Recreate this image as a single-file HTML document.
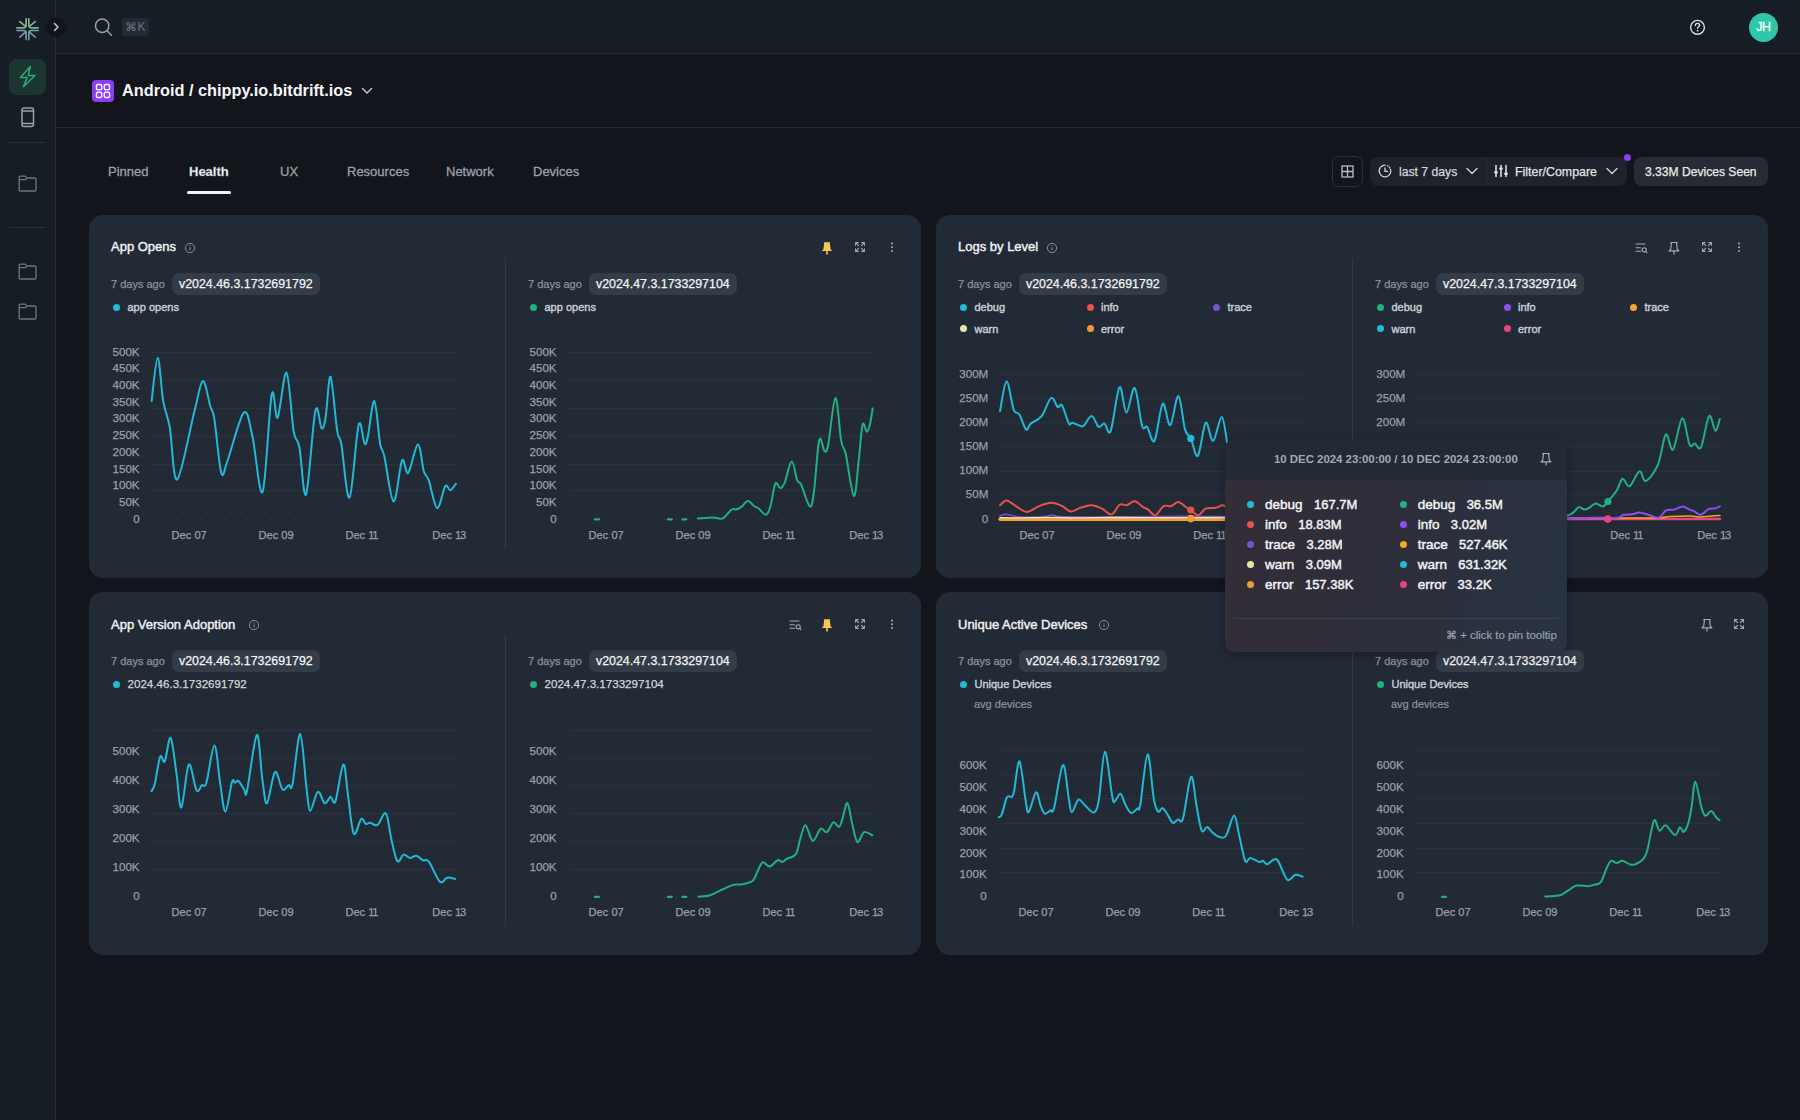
<!DOCTYPE html><html><head><meta charset='utf-8'><style>
*{box-sizing:border-box;margin:0;padding:0}
html,body{width:1800px;height:1120px;overflow:hidden;background:#12151c;font-family:"Liberation Sans", sans-serif;}
.a{position:absolute;white-space:nowrap}
.card{position:absolute;background:#222a36;border-radius:14px}
.ttl{font-size:13px;font-weight:400;color:#f1f3f5;-webkit-text-stroke:0.4px #f1f3f5}
.ago{font-size:11px;color:#8b929b;-webkit-text-stroke:0.25px #8b929b}
.badge{position:absolute;height:22px;border-radius:7px;background:#333c47;color:#f3f4f6;font-size:12.4px;line-height:22px;padding:0 7px;-webkit-text-stroke:0.25px #f3f4f6}
.leg{font-size:11px;font-weight:400;color:#c9ced4;-webkit-text-stroke:0.4px #c9ced4}
.leg2{font-size:11.6px;color:#d3d7dc;-webkit-text-stroke:0.25px #d3d7dc}
.dot{position:absolute;width:7px;height:7px;border-radius:50%}
.yl{position:absolute;font-size:11.6px;color:#9aa0a8;-webkit-text-stroke:0.25px #9aa0a8;text-align:right;width:40px;line-height:12px}
.xl{position:absolute;font-size:11.1px;color:#9aa0a8;-webkit-text-stroke:0.25px #9aa0a8;line-height:13px}
.tab{position:absolute;font-size:13px;color:#9ba1a9;top:164px;line-height:15px;-webkit-text-stroke:0.3px #9ba1a9}
</style></head><body><div class='a' style='left:0;top:0;width:55px;height:1120px;background:#161d24'></div><div class='a' style='left:55px;top:0;width:1px;height:1120px;background:#272c35'></div><div class='a' style='left:56px;top:54px;width:4px;height:1066px;background:#131619'></div><div class='a' style='left:56px;top:0;width:1744px;height:53px;background:#161d24'></div><div class='a' style='left:56px;top:53px;width:1744px;height:1px;background:#272c35'></div><div class='a' style='left:56px;top:127px;width:1744px;height:1px;background:#262b33'></div><svg class='a' style='left:14px;top:15px' width='28' height='28' viewBox='0 0 28 28'>
<defs><linearGradient id='lg' gradientUnits='userSpaceOnUse' x1='0' y1='3' x2='0' y2='26'><stop offset='0' stop-color='#8dbf8e'/><stop offset='0.5' stop-color='#7ea89f'/><stop offset='1' stop-color='#648db8'/></linearGradient></defs>
<g stroke='url(#lg)' stroke-width='1.7' stroke-linecap='round' fill='none' transform='translate(13.5 14.3) scale(0.95) translate(-13.5 -14.3)'>
<path d='M12.1,3.3V10Q12.1,12.8 9.3,12.8H2.3M14.9,3.3V10Q14.9,12.8 17.7,12.8H24.7M12.1,25.3V18.4Q12.1,15.6 9.3,15.6H2.3M14.9,25.3V18.4Q14.9,15.6 17.7,15.6H24.7M5.4,6.1L10.5,10.4M21.6,6.1L16.5,10.4M5.4,22.5L10.4,18M21.6,22.5L16.6,18'/>
</g></svg><div class='a' style='left:46px;top:17px;width:20px;height:20px;border-radius:50%;background:#11141a'></div><svg class='a' style='left:51px;top:21px' width='10' height='12' viewBox='0 0 10 12'><path d='M3.5 2.5L7 6L3.5 9.5' stroke='#c4c8ce' stroke-width='1.5' fill='none' stroke-linecap='round' stroke-linejoin='round'/></svg><svg class='a' style='left:92px;top:16px' width='24' height='24' viewBox='0 0 24 24'><circle cx='10.2' cy='9.8' r='6.7' stroke='#9aa0a8' stroke-width='1.5' fill='none'/><path d='M15 14.8L19.4 19.2' stroke='#9aa0a8' stroke-width='1.5' stroke-linecap='round'/></svg><div class='a' style='left:122px;top:18px;width:27px;height:18px;border-radius:3px;background:#232a33;color:#6d7480;font-size:12px;line-height:18px;text-align:center'>&#8984;K</div><svg class='a' style='left:1688px;top:18px' width='19' height='19' viewBox='0 0 19 19'><circle cx='9.5' cy='9.3' r='6.9' stroke='#dcdfe3' stroke-width='1.4' fill='none'/><path d='M7.4 7.4C7.4 6.2 8.3 5.4 9.5 5.4C10.7 5.4 11.6 6.2 11.6 7.3C11.6 8.6 9.6 8.8 9.6 10.3' stroke='#dcdfe3' stroke-width='1.4' fill='none' stroke-linecap='round'/><circle cx='9.6' cy='12.7' r='0.9' fill='#dcdfe3'/></svg><div class='a' style='left:1749px;top:13px;width:29px;height:29px;border-radius:50%;background:#2ec7a9;color:#f4fffb;font-size:12.5px;font-weight:400;line-height:29px;text-align:center;letter-spacing:-0.3px;-webkit-text-stroke:0.35px #f4fffb'>JH</div><div class='a' style='left:9px;top:59px;width:37px;height:36px;border-radius:8px;background:#1b3530'></div><svg class='a' style='left:18px;top:65px' width='20' height='24' viewBox='0 0 20 24'><path d='M12.3 1.6L2.4 12.4H9.2L5.4 21.8L16.9 10.4H10.3Z' stroke='#28ad7b' stroke-width='1.45' fill='none' stroke-linejoin='round'/></svg><svg class='a' style='left:20px;top:106px' width='16' height='22' viewBox='0 0 16 22'><rect x='2' y='2' width='11.5' height='18.5' rx='2' stroke='#9aa1ab' stroke-width='1.5' fill='none'/><path d='M2 5H13.5M2 17.5H13.5' stroke='#9aa1ab' stroke-width='1.3'/></svg><div class='a' style='left:9px;top:142px;width:37px;height:1px;background:#2a2f38'></div><div class='a' style='left:9px;top:227px;width:37px;height:1px;background:#2a2f38'></div><svg class='a' style='left:18px;top:175px' width='20' height='17' viewBox='0 0 20 17'><path d='M1.2 2.2C1.2 1.6 1.6 1.2 2.2 1.2H7L8.6 3H17C17.6 3 18 3.4 18 4V15C18 15.6 17.6 16 17 16H2.2C1.6 16 1.2 15.6 1.2 15Z M1.2 4.6H8.6' stroke='#6f7680' stroke-width='1.3' fill='none' stroke-linejoin='round'/></svg><svg class='a' style='left:18px;top:263px' width='20' height='17' viewBox='0 0 20 17'><path d='M1.2 2.2C1.2 1.6 1.6 1.2 2.2 1.2H7L8.6 3H17C17.6 3 18 3.4 18 4V15C18 15.6 17.6 16 17 16H2.2C1.6 16 1.2 15.6 1.2 15Z M1.2 4.6H8.6' stroke='#6f7680' stroke-width='1.3' fill='none' stroke-linejoin='round'/></svg><svg class='a' style='left:18px;top:303px' width='20' height='17' viewBox='0 0 20 17'><path d='M1.2 2.2C1.2 1.6 1.6 1.2 2.2 1.2H7L8.6 3H17C17.6 3 18 3.4 18 4V15C18 15.6 17.6 16 17 16H2.2C1.6 16 1.2 15.6 1.2 15Z M1.2 4.6H8.6' stroke='#6f7680' stroke-width='1.3' fill='none' stroke-linejoin='round'/></svg><div class='a' style='left:92px;top:80px;width:22px;height:22px;border-radius:4px;background:#8a3ff2'></div><svg class='a' style='left:92px;top:80px' width='22' height='22' viewBox='0 0 22 22'><g stroke='#f4ecff' stroke-width='1.5' fill='none'><rect x='4.5' y='4.5' width='5.2' height='5.2' rx='1.2'/><rect x='12.3' y='4.5' width='5.2' height='5.2' rx='1.2'/><rect x='4.5' y='12.3' width='5.2' height='5.2' rx='1.2'/><rect x='12.3' y='12.3' width='5.2' height='5.2' rx='1.2'/></g></svg><div class='a' style='left:122px;top:81px;font-size:16.3px;font-weight:700;color:#f5f6f8;line-height:19px'>Android / chippy.io.bitdrift.ios</div><svg class='a' style='left:360px;top:85px' width='14' height='12' viewBox='0 0 14 12'><path d='M2.5 3.5L7 8L11.5 3.5' stroke='#c9cdd3' stroke-width='1.4' fill='none' stroke-linecap='round' stroke-linejoin='round'/></svg><div class='tab' style='left:108px'>Pinned</div><div class='tab' style='left:189px;color:#f6f7f9;font-weight:700'>Health</div><div class='tab' style='left:280px'>UX</div><div class='tab' style='left:347px'>Resources</div><div class='tab' style='left:446px'>Network</div><div class='tab' style='left:533px'>Devices</div><div class='a' style='left:187px;top:191px;width:44px;height:3px;border-radius:2px;background:#f0f2f4'></div><div class='a' style='left:1332px;top:156px;width:31px;height:31px;border-radius:7px;border:1px solid #2b3039;background:#12151b'></div><svg class='a' style='left:1340px;top:164px' width='15' height='15' viewBox='0 0 15 15'><g stroke='#b9bec5' stroke-width='1.3' fill='none'><rect x='2' y='2' width='11' height='11'/><path d='M7.5 2V13M2 7.5H13'/></g></svg><div class='a' style='left:1370px;top:157px;width:257px;height:29px;border-radius:8px;background:#1e222a'></div><div class='a' style='left:1486px;top:157px;width:1px;height:29px;background:#2a2e36'></div><svg class='a' style='left:1377px;top:163px' width='16' height='16' viewBox='0 0 16 16'><g stroke='#d4d7dc' stroke-width='1.3' fill='none' stroke-linecap='round'><path d='M8 2.2A5.8 5.8 0 1 0 13.8 8'/><path d='M10.5 2.8L11 3.1M12.4 4.3L12.8 4.9M13.5 6.3L13.7 6.9'/><path d='M8 5V8.3H10.6'/></g></svg><div class='a' style='left:1399px;top:165px;font-size:12.2px;color:#d3d6db;line-height:15px;-webkit-text-stroke:0.25px #d3d6db'>last 7 days</div><svg class='a' style='left:1465px;top:165px' width='14' height='12' viewBox='0 0 14 12'><path d='M2 3.5L7 8.5L12 3.5' stroke='#cfd3d8' stroke-width='1.4' fill='none' stroke-linecap='round' stroke-linejoin='round'/></svg><svg class='a' style='left:1493px;top:163px' width='16' height='16' viewBox='0 0 16 16'><g stroke='#e3e5e9' stroke-width='1.5' stroke-linecap='round'><path d='M3 2.5V13.5M8 2.5V13.5M13 2.5V13.5'/></g><g fill='#e3e5e9'><rect x='1.2' y='8.2' width='3.6' height='2.4' rx='1'/><rect x='6.2' y='4.4' width='3.6' height='2.4' rx='1'/><rect x='11.2' y='9.6' width='3.6' height='2.4' rx='1'/></g></svg><div class='a' style='left:1515px;top:165px;font-size:12.4px;color:#e0e3e7;line-height:15px;-webkit-text-stroke:0.25px #e0e3e7'>Filter/Compare</div><svg class='a' style='left:1605px;top:165px' width='14' height='12' viewBox='0 0 14 12'><path d='M2 3.5L7 8.5L12 3.5' stroke='#cfd3d8' stroke-width='1.4' fill='none' stroke-linecap='round' stroke-linejoin='round'/></svg><div class='a' style='left:1623.5px;top:153.5px;width:7px;height:7px;border-radius:50%;background:#8a3ef5'></div><div class='a' style='left:1634px;top:157px;width:134px;height:29px;border-radius:8px;background:#272b33;color:#e8eaed;font-size:12.1px;line-height:31px;padding-left:11px;-webkit-text-stroke:0.25px #e8eaed'>3.33M Devices Seen</div><div class='card' style='left:89px;top:215px;width:832px;height:363px'></div><div class='a' style='left:505px;top:258px;width:1px;height:291px;background:#323a46'></div><div class='card' style='left:936px;top:215px;width:832px;height:363px'></div><div class='a' style='left:1352px;top:258px;width:1px;height:291px;background:#323a46'></div><div class='card' style='left:89px;top:592px;width:832px;height:363px'></div><div class='a' style='left:505px;top:635px;width:1px;height:291px;background:#323a46'></div><div class='card' style='left:936px;top:592px;width:832px;height:363px'></div><div class='a' style='left:1352px;top:635px;width:1px;height:291px;background:#323a46'></div><div class='a ttl' style='left:111px;top:240px;line-height:14px'>App Opens</div><svg class='a' style='left:184px;top:242.3px' width='12' height='12' viewBox='0 0 12 12'><circle cx='6' cy='6' r='4.6' stroke='#8a919b' stroke-width='1' fill='none'/><path d='M6 5.3V8.3' stroke='#8a919b' stroke-width='1'/><circle cx='6' cy='3.8' r='0.6' fill='#8a919b'/></svg><div class='a ttl' style='left:958px;top:240px;line-height:14px'>Logs by Level</div><svg class='a' style='left:1046px;top:242.3px' width='12' height='12' viewBox='0 0 12 12'><circle cx='6' cy='6' r='4.6' stroke='#8a919b' stroke-width='1' fill='none'/><path d='M6 5.3V8.3' stroke='#8a919b' stroke-width='1'/><circle cx='6' cy='3.8' r='0.6' fill='#8a919b'/></svg><div class='a ttl' style='left:111px;top:618px;line-height:14px'>App Version Adoption</div><svg class='a' style='left:247.5px;top:619.3px' width='12' height='12' viewBox='0 0 12 12'><circle cx='6' cy='6' r='4.6' stroke='#8a919b' stroke-width='1' fill='none'/><path d='M6 5.3V8.3' stroke='#8a919b' stroke-width='1'/><circle cx='6' cy='3.8' r='0.6' fill='#8a919b'/></svg><div class='a ttl' style='left:958px;top:618px;line-height:14px'>Unique Active Devices</div><svg class='a' style='left:1097.5px;top:619.3px' width='12' height='12' viewBox='0 0 12 12'><circle cx='6' cy='6' r='4.6' stroke='#8a919b' stroke-width='1' fill='none'/><path d='M6 5.3V8.3' stroke='#8a919b' stroke-width='1'/><circle cx='6' cy='3.8' r='0.6' fill='#8a919b'/></svg><svg class='a' style='left:819px;top:240px' width='16' height='16' viewBox='0 0 16 16'><path d='M4.6 2.2H11.4L10.8 3L11.6 9.2L13.2 11H2.8L4.4 9.2L5.2 3Z' fill='#f6ca52'/><path d='M8 11V14.6' stroke='#f6ca52' stroke-width='1.6'/></svg><svg class='a' style='left:853px;top:240px' width='14' height='14' viewBox='0 0 14 14'><g stroke='#a3a9b1' stroke-width='1.1' fill='none' stroke-linecap='round'><path d='M2.6 5.2V2.6H5.2M2.6 2.6L5.6 5.6M11.4 5.2V2.6H8.8M11.4 2.6L8.4 5.6M2.6 8.8V11.4H5.2M2.6 11.4L5.6 8.4M11.4 8.8V11.4H8.8M11.4 11.4L8.4 8.4'/></g></svg><svg class='a' style='left:889px;top:240px' width='6' height='14' viewBox='0 0 6 14'><circle cx='3' cy='3.5' r='1' fill='#a9aeb6'/><circle cx='3' cy='7.2' r='1' fill='#a9aeb6'/><circle cx='3' cy='10.9' r='1' fill='#a9aeb6'/></svg><svg class='a' style='left:1634.2px;top:240.8px' width='16' height='14' viewBox='0 0 16 14'><g stroke='#a3a9b1' stroke-width='1.1' fill='none' stroke-linecap='round'><path d='M2 3H11M2 6.8H6.5M2 10.2H6.5'/><circle cx='10.2' cy='8.8' r='2.1'/><path d='M11.7 10.3L13 11.6'/></g></svg><svg class='a' style='left:1666px;top:240px' width='16' height='16' viewBox='0 0 16 16'><path d='M4.8 2.5H11.2L10.6 3.2L11.3 9.2L12.9 10.9H3.1L4.7 9.2L5.4 3.2Z' stroke='#a3a9b1' stroke-width='1.2' fill='none' stroke-linejoin='round'/><path d='M8 10.9V14.5' stroke='#a3a9b1' stroke-width='1.2'/></svg><svg class='a' style='left:1700px;top:240px' width='14' height='14' viewBox='0 0 14 14'><g stroke='#a3a9b1' stroke-width='1.1' fill='none' stroke-linecap='round'><path d='M2.6 5.2V2.6H5.2M2.6 2.6L5.6 5.6M11.4 5.2V2.6H8.8M11.4 2.6L8.4 5.6M2.6 8.8V11.4H5.2M2.6 11.4L5.6 8.4M11.4 8.8V11.4H8.8M11.4 11.4L8.4 8.4'/></g></svg><svg class='a' style='left:1736px;top:240px' width='6' height='14' viewBox='0 0 6 14'><circle cx='3' cy='3.5' r='1' fill='#a9aeb6'/><circle cx='3' cy='7.2' r='1' fill='#a9aeb6'/><circle cx='3' cy='10.9' r='1' fill='#a9aeb6'/></svg><svg class='a' style='left:788.2px;top:617.8px' width='16' height='14' viewBox='0 0 16 14'><g stroke='#a3a9b1' stroke-width='1.1' fill='none' stroke-linecap='round'><path d='M2 3H11M2 6.8H6.5M2 10.2H6.5'/><circle cx='10.2' cy='8.8' r='2.1'/><path d='M11.7 10.3L13 11.6'/></g></svg><svg class='a' style='left:819px;top:617px' width='16' height='16' viewBox='0 0 16 16'><path d='M4.6 2.2H11.4L10.8 3L11.6 9.2L13.2 11H2.8L4.4 9.2L5.2 3Z' fill='#f6ca52'/><path d='M8 11V14.6' stroke='#f6ca52' stroke-width='1.6'/></svg><svg class='a' style='left:853px;top:617px' width='14' height='14' viewBox='0 0 14 14'><g stroke='#a3a9b1' stroke-width='1.1' fill='none' stroke-linecap='round'><path d='M2.6 5.2V2.6H5.2M2.6 2.6L5.6 5.6M11.4 5.2V2.6H8.8M11.4 2.6L8.4 5.6M2.6 8.8V11.4H5.2M2.6 11.4L5.6 8.4M11.4 8.8V11.4H8.8M11.4 11.4L8.4 8.4'/></g></svg><svg class='a' style='left:889px;top:617px' width='6' height='14' viewBox='0 0 6 14'><circle cx='3' cy='3.5' r='1' fill='#a9aeb6'/><circle cx='3' cy='7.2' r='1' fill='#a9aeb6'/><circle cx='3' cy='10.9' r='1' fill='#a9aeb6'/></svg><svg class='a' style='left:1699px;top:617px' width='16' height='16' viewBox='0 0 16 16'><path d='M4.8 2.5H11.2L10.6 3.2L11.3 9.2L12.9 10.9H3.1L4.7 9.2L5.4 3.2Z' stroke='#a3a9b1' stroke-width='1.2' fill='none' stroke-linejoin='round'/><path d='M8 10.9V14.5' stroke='#a3a9b1' stroke-width='1.2'/></svg><svg class='a' style='left:1732px;top:617px' width='14' height='14' viewBox='0 0 14 14'><g stroke='#a3a9b1' stroke-width='1.1' fill='none' stroke-linecap='round'><path d='M2.6 5.2V2.6H5.2M2.6 2.6L5.6 5.6M11.4 5.2V2.6H8.8M11.4 2.6L8.4 5.6M2.6 8.8V11.4H5.2M2.6 11.4L5.6 8.4M11.4 8.8V11.4H8.8M11.4 11.4L8.4 8.4'/></g></svg><div class='a ago' style='left:111px;top:277px;line-height:14px'>7 days ago</div><div class='badge' style='left:172px;top:273px'>v2024.46.3.1732691792</div><div class='a ago' style='left:528px;top:277px;line-height:14px'>7 days ago</div><div class='badge' style='left:589px;top:273px'>v2024.47.3.1733297104</div><div class='a ago' style='left:958px;top:277px;line-height:14px'>7 days ago</div><div class='badge' style='left:1019px;top:273px'>v2024.46.3.1732691792</div><div class='a ago' style='left:1375px;top:277px;line-height:14px'>7 days ago</div><div class='badge' style='left:1436px;top:273px'>v2024.47.3.1733297104</div><div class='a ago' style='left:111px;top:654px;line-height:14px'>7 days ago</div><div class='badge' style='left:172px;top:650px'>v2024.46.3.1732691792</div><div class='a ago' style='left:528px;top:654px;line-height:14px'>7 days ago</div><div class='badge' style='left:589px;top:650px'>v2024.47.3.1733297104</div><div class='a ago' style='left:958px;top:654px;line-height:14px'>7 days ago</div><div class='badge' style='left:1019px;top:650px'>v2024.46.3.1732691792</div><div class='a ago' style='left:1375px;top:654px;line-height:14px'>7 days ago</div><div class='badge' style='left:1436px;top:650px'>v2024.47.3.1733297104</div><div class='dot' style='left:113.0px;top:303.5px;background:#22b9d5'></div><div class='a leg' style='left:127.5px;top:300px;line-height:14px'>app opens</div><div class='dot' style='left:530.0px;top:303.5px;background:#23b07f'></div><div class='a leg' style='left:544.5px;top:300px;line-height:14px'>app opens</div><div class='dot' style='left:113.0px;top:680.5px;background:#22b9d5'></div><div class='a leg2' style='left:127.5px;top:677px;line-height:14px'>2024.46.3.1732691792</div><div class='dot' style='left:530.0px;top:680.5px;background:#23b07f'></div><div class='a leg2' style='left:544.5px;top:677px;line-height:14px'>2024.47.3.1733297104</div><div class='dot' style='left:960.0px;top:680.5px;background:#22b9d5'></div><div class='a leg' style='left:974.5px;top:677px;line-height:14px'>Unique Devices</div><div class='dot' style='left:1377.0px;top:680.5px;background:#23b07f'></div><div class='a leg' style='left:1391.5px;top:677px;line-height:14px'>Unique Devices</div><div class='a' style='left:974px;top:697px;font-size:11px;color:#8f959e;line-height:14px;-webkit-text-stroke:0.2px #8f959e'>avg devices</div><div class='a' style='left:1391px;top:697px;font-size:11px;color:#8f959e;line-height:14px;-webkit-text-stroke:0.2px #8f959e'>avg devices</div><div class='dot' style='left:960.0px;top:303.5px;background:#22b9d5'></div><div class='a leg' style='left:974.5px;top:300px;line-height:14px'>debug</div><div class='dot' style='left:1086.5px;top:303.5px;background:#e5534b'></div><div class='a leg' style='left:1101.0px;top:300px;line-height:14px'>info</div><div class='dot' style='left:1213.0px;top:303.5px;background:#7b4fd6'></div><div class='a leg' style='left:1227.5px;top:300px;line-height:14px'>trace</div><div class='dot' style='left:960.0px;top:325.0px;background:#e9e6a6'></div><div class='a leg' style='left:974.5px;top:321.5px;line-height:14px'>warn</div><div class='dot' style='left:1086.5px;top:325.0px;background:#f29a33'></div><div class='a leg' style='left:1101.0px;top:321.5px;line-height:14px'>error</div><div class='dot' style='left:1377.0px;top:303.5px;background:#23b07f'></div><div class='a leg' style='left:1391.5px;top:300px;line-height:14px'>debug</div><div class='dot' style='left:1503.5px;top:303.5px;background:#8d4ef0'></div><div class='a leg' style='left:1518.0px;top:300px;line-height:14px'>info</div><div class='dot' style='left:1630.0px;top:303.5px;background:#f5a623'></div><div class='a leg' style='left:1644.5px;top:300px;line-height:14px'>trace</div><div class='dot' style='left:1377.0px;top:325.0px;background:#22b9d5'></div><div class='a leg' style='left:1391.5px;top:321.5px;line-height:14px'>warn</div><div class='dot' style='left:1503.5px;top:325.0px;background:#e8457c'></div><div class='a leg' style='left:1518.0px;top:321.5px;line-height:14px'>error</div><div class='a' style='left:152px;top:351.9px;width:304px;height:1px;background:#2b3340'></div><div class='a' style='left:152px;top:379.6px;width:304px;height:1px;background:#2b3340'></div><div class='a' style='left:152px;top:408.0px;width:304px;height:1px;background:#2b3340'></div><div class='a' style='left:152px;top:436.1px;width:304px;height:1px;background:#2b3340'></div><div class='a' style='left:152px;top:464.2px;width:304px;height:1px;background:#2b3340'></div><div class='a' style='left:152px;top:490.1px;width:304px;height:1px;background:#2b3340'></div><div class='a' style='left:152.5px;top:518.7px;width:1px;height:1px;background:#3d4552'></div><div class='a' style='left:164.3px;top:518.7px;width:1px;height:1px;background:#3d4552'></div><div class='a' style='left:176.2px;top:518.7px;width:1px;height:1px;background:#3d4552'></div><div class='a' style='left:188.0px;top:518.7px;width:1px;height:1px;background:#3d4552'></div><div class='a' style='left:199.9px;top:518.7px;width:1px;height:1px;background:#3d4552'></div><div class='a' style='left:211.7px;top:518.7px;width:1px;height:1px;background:#3d4552'></div><div class='a' style='left:223.5px;top:518.7px;width:1px;height:1px;background:#3d4552'></div><div class='a' style='left:235.4px;top:518.7px;width:1px;height:1px;background:#3d4552'></div><div class='a' style='left:247.2px;top:518.7px;width:1px;height:1px;background:#3d4552'></div><div class='a' style='left:259.1px;top:518.7px;width:1px;height:1px;background:#3d4552'></div><div class='a' style='left:270.9px;top:518.7px;width:1px;height:1px;background:#3d4552'></div><div class='a' style='left:282.7px;top:518.7px;width:1px;height:1px;background:#3d4552'></div><div class='a' style='left:294.6px;top:518.7px;width:1px;height:1px;background:#3d4552'></div><div class='a' style='left:306.4px;top:518.7px;width:1px;height:1px;background:#3d4552'></div><div class='a' style='left:318.3px;top:518.7px;width:1px;height:1px;background:#3d4552'></div><div class='a' style='left:330.1px;top:518.7px;width:1px;height:1px;background:#3d4552'></div><div class='a' style='left:341.9px;top:518.7px;width:1px;height:1px;background:#3d4552'></div><div class='a' style='left:353.8px;top:518.7px;width:1px;height:1px;background:#3d4552'></div><div class='a' style='left:365.6px;top:518.7px;width:1px;height:1px;background:#3d4552'></div><div class='a' style='left:377.5px;top:518.7px;width:1px;height:1px;background:#3d4552'></div><div class='a' style='left:389.3px;top:518.7px;width:1px;height:1px;background:#3d4552'></div><div class='a' style='left:401.1px;top:518.7px;width:1px;height:1px;background:#3d4552'></div><div class='a' style='left:413.0px;top:518.7px;width:1px;height:1px;background:#3d4552'></div><div class='a' style='left:424.8px;top:518.7px;width:1px;height:1px;background:#3d4552'></div><div class='a' style='left:436.7px;top:518.7px;width:1px;height:1px;background:#3d4552'></div><div class='a' style='left:448.5px;top:518.7px;width:1px;height:1px;background:#3d4552'></div><div class='yl' style='left:99.6px;top:345.6px'>500K</div><div class='yl' style='left:99.6px;top:362.3px'>450K</div><div class='yl' style='left:99.6px;top:379.0px'>400K</div><div class='yl' style='left:99.6px;top:395.7px'>350K</div><div class='yl' style='left:99.6px;top:412.4px'>300K</div><div class='yl' style='left:99.6px;top:429.1px'>250K</div><div class='yl' style='left:99.6px;top:445.8px'>200K</div><div class='yl' style='left:99.6px;top:462.5px'>150K</div><div class='yl' style='left:99.6px;top:479.2px'>100K</div><div class='yl' style='left:99.6px;top:495.9px'>50K</div><div class='yl' style='left:99.6px;top:512.6px'>0</div><div class='xl' style='left:171.6px;top:528.5px'>Dec 07</div><div class='xl' style='left:258.5px;top:528.5px'>Dec 09</div><div class='xl' style='left:345.4px;top:528.5px'>Dec <span style='letter-spacing:-1.3px'>11</span></div><div class='xl' style='left:432.3px;top:528.5px'>Dec <span style='letter-spacing:-1.3px'>1</span>3</div><div class='a' style='left:152px;top:730.2px;width:304px;height:1px;background:#2b3340'></div><div class='a' style='left:152px;top:757.5px;width:304px;height:1px;background:#2b3340'></div><div class='a' style='left:152px;top:784.7px;width:304px;height:1px;background:#2b3340'></div><div class='a' style='left:152px;top:812.8px;width:304px;height:1px;background:#2b3340'></div><div class='a' style='left:152px;top:840.5px;width:304px;height:1px;background:#2b3340'></div><div class='a' style='left:152px;top:868.6px;width:304px;height:1px;background:#2b3340'></div><div class='a' style='left:152.5px;top:896.5px;width:1px;height:1px;background:#3d4552'></div><div class='a' style='left:164.3px;top:896.5px;width:1px;height:1px;background:#3d4552'></div><div class='a' style='left:176.2px;top:896.5px;width:1px;height:1px;background:#3d4552'></div><div class='a' style='left:188.0px;top:896.5px;width:1px;height:1px;background:#3d4552'></div><div class='a' style='left:199.9px;top:896.5px;width:1px;height:1px;background:#3d4552'></div><div class='a' style='left:211.7px;top:896.5px;width:1px;height:1px;background:#3d4552'></div><div class='a' style='left:223.5px;top:896.5px;width:1px;height:1px;background:#3d4552'></div><div class='a' style='left:235.4px;top:896.5px;width:1px;height:1px;background:#3d4552'></div><div class='a' style='left:247.2px;top:896.5px;width:1px;height:1px;background:#3d4552'></div><div class='a' style='left:259.1px;top:896.5px;width:1px;height:1px;background:#3d4552'></div><div class='a' style='left:270.9px;top:896.5px;width:1px;height:1px;background:#3d4552'></div><div class='a' style='left:282.7px;top:896.5px;width:1px;height:1px;background:#3d4552'></div><div class='a' style='left:294.6px;top:896.5px;width:1px;height:1px;background:#3d4552'></div><div class='a' style='left:306.4px;top:896.5px;width:1px;height:1px;background:#3d4552'></div><div class='a' style='left:318.3px;top:896.5px;width:1px;height:1px;background:#3d4552'></div><div class='a' style='left:330.1px;top:896.5px;width:1px;height:1px;background:#3d4552'></div><div class='a' style='left:341.9px;top:896.5px;width:1px;height:1px;background:#3d4552'></div><div class='a' style='left:353.8px;top:896.5px;width:1px;height:1px;background:#3d4552'></div><div class='a' style='left:365.6px;top:896.5px;width:1px;height:1px;background:#3d4552'></div><div class='a' style='left:377.5px;top:896.5px;width:1px;height:1px;background:#3d4552'></div><div class='a' style='left:389.3px;top:896.5px;width:1px;height:1px;background:#3d4552'></div><div class='a' style='left:401.1px;top:896.5px;width:1px;height:1px;background:#3d4552'></div><div class='a' style='left:413.0px;top:896.5px;width:1px;height:1px;background:#3d4552'></div><div class='a' style='left:424.8px;top:896.5px;width:1px;height:1px;background:#3d4552'></div><div class='a' style='left:436.7px;top:896.5px;width:1px;height:1px;background:#3d4552'></div><div class='a' style='left:448.5px;top:896.5px;width:1px;height:1px;background:#3d4552'></div><div class='yl' style='left:99.6px;top:744.6px'>500K</div><div class='yl' style='left:99.6px;top:773.7px'>400K</div><div class='yl' style='left:99.6px;top:802.8px'>300K</div><div class='yl' style='left:99.6px;top:832.0px'>200K</div><div class='yl' style='left:99.6px;top:861.1px'>100K</div><div class='yl' style='left:99.6px;top:890.2px'>0</div><div class='xl' style='left:171.6px;top:906.0px'>Dec 07</div><div class='xl' style='left:258.5px;top:906.0px'>Dec 09</div><div class='xl' style='left:345.4px;top:906.0px'>Dec <span style='letter-spacing:-1.3px'>11</span></div><div class='xl' style='left:432.3px;top:906.0px'>Dec <span style='letter-spacing:-1.3px'>1</span>3</div><div class='a' style='left:569px;top:351.9px;width:304px;height:1px;background:#2b3340'></div><div class='a' style='left:569px;top:379.6px;width:304px;height:1px;background:#2b3340'></div><div class='a' style='left:569px;top:408.0px;width:304px;height:1px;background:#2b3340'></div><div class='a' style='left:569px;top:436.1px;width:304px;height:1px;background:#2b3340'></div><div class='a' style='left:569px;top:464.2px;width:304px;height:1px;background:#2b3340'></div><div class='a' style='left:569px;top:490.1px;width:304px;height:1px;background:#2b3340'></div><div class='a' style='left:569.5px;top:518.7px;width:1px;height:1px;background:#3d4552'></div><div class='a' style='left:581.3px;top:518.7px;width:1px;height:1px;background:#3d4552'></div><div class='a' style='left:593.2px;top:518.7px;width:1px;height:1px;background:#3d4552'></div><div class='a' style='left:605.0px;top:518.7px;width:1px;height:1px;background:#3d4552'></div><div class='a' style='left:616.9px;top:518.7px;width:1px;height:1px;background:#3d4552'></div><div class='a' style='left:628.7px;top:518.7px;width:1px;height:1px;background:#3d4552'></div><div class='a' style='left:640.5px;top:518.7px;width:1px;height:1px;background:#3d4552'></div><div class='a' style='left:652.4px;top:518.7px;width:1px;height:1px;background:#3d4552'></div><div class='a' style='left:664.2px;top:518.7px;width:1px;height:1px;background:#3d4552'></div><div class='a' style='left:676.1px;top:518.7px;width:1px;height:1px;background:#3d4552'></div><div class='a' style='left:687.9px;top:518.7px;width:1px;height:1px;background:#3d4552'></div><div class='a' style='left:699.7px;top:518.7px;width:1px;height:1px;background:#3d4552'></div><div class='a' style='left:711.6px;top:518.7px;width:1px;height:1px;background:#3d4552'></div><div class='a' style='left:723.4px;top:518.7px;width:1px;height:1px;background:#3d4552'></div><div class='a' style='left:735.3px;top:518.7px;width:1px;height:1px;background:#3d4552'></div><div class='a' style='left:747.1px;top:518.7px;width:1px;height:1px;background:#3d4552'></div><div class='a' style='left:758.9px;top:518.7px;width:1px;height:1px;background:#3d4552'></div><div class='a' style='left:770.8px;top:518.7px;width:1px;height:1px;background:#3d4552'></div><div class='a' style='left:782.6px;top:518.7px;width:1px;height:1px;background:#3d4552'></div><div class='a' style='left:794.5px;top:518.7px;width:1px;height:1px;background:#3d4552'></div><div class='a' style='left:806.3px;top:518.7px;width:1px;height:1px;background:#3d4552'></div><div class='a' style='left:818.1px;top:518.7px;width:1px;height:1px;background:#3d4552'></div><div class='a' style='left:830.0px;top:518.7px;width:1px;height:1px;background:#3d4552'></div><div class='a' style='left:841.8px;top:518.7px;width:1px;height:1px;background:#3d4552'></div><div class='a' style='left:853.7px;top:518.7px;width:1px;height:1px;background:#3d4552'></div><div class='a' style='left:865.5px;top:518.7px;width:1px;height:1px;background:#3d4552'></div><div class='yl' style='left:516.6px;top:345.6px'>500K</div><div class='yl' style='left:516.6px;top:362.3px'>450K</div><div class='yl' style='left:516.6px;top:379.0px'>400K</div><div class='yl' style='left:516.6px;top:395.7px'>350K</div><div class='yl' style='left:516.6px;top:412.4px'>300K</div><div class='yl' style='left:516.6px;top:429.1px'>250K</div><div class='yl' style='left:516.6px;top:445.8px'>200K</div><div class='yl' style='left:516.6px;top:462.5px'>150K</div><div class='yl' style='left:516.6px;top:479.2px'>100K</div><div class='yl' style='left:516.6px;top:495.9px'>50K</div><div class='yl' style='left:516.6px;top:512.6px'>0</div><div class='xl' style='left:588.6px;top:528.5px'>Dec 07</div><div class='xl' style='left:675.5px;top:528.5px'>Dec 09</div><div class='xl' style='left:762.4px;top:528.5px'>Dec <span style='letter-spacing:-1.3px'>11</span></div><div class='xl' style='left:849.3px;top:528.5px'>Dec <span style='letter-spacing:-1.3px'>1</span>3</div><div class='a' style='left:569px;top:730.2px;width:304px;height:1px;background:#2b3340'></div><div class='a' style='left:569px;top:757.5px;width:304px;height:1px;background:#2b3340'></div><div class='a' style='left:569px;top:784.7px;width:304px;height:1px;background:#2b3340'></div><div class='a' style='left:569px;top:812.8px;width:304px;height:1px;background:#2b3340'></div><div class='a' style='left:569px;top:840.5px;width:304px;height:1px;background:#2b3340'></div><div class='a' style='left:569px;top:868.6px;width:304px;height:1px;background:#2b3340'></div><div class='a' style='left:569.5px;top:896.5px;width:1px;height:1px;background:#3d4552'></div><div class='a' style='left:581.3px;top:896.5px;width:1px;height:1px;background:#3d4552'></div><div class='a' style='left:593.2px;top:896.5px;width:1px;height:1px;background:#3d4552'></div><div class='a' style='left:605.0px;top:896.5px;width:1px;height:1px;background:#3d4552'></div><div class='a' style='left:616.9px;top:896.5px;width:1px;height:1px;background:#3d4552'></div><div class='a' style='left:628.7px;top:896.5px;width:1px;height:1px;background:#3d4552'></div><div class='a' style='left:640.5px;top:896.5px;width:1px;height:1px;background:#3d4552'></div><div class='a' style='left:652.4px;top:896.5px;width:1px;height:1px;background:#3d4552'></div><div class='a' style='left:664.2px;top:896.5px;width:1px;height:1px;background:#3d4552'></div><div class='a' style='left:676.1px;top:896.5px;width:1px;height:1px;background:#3d4552'></div><div class='a' style='left:687.9px;top:896.5px;width:1px;height:1px;background:#3d4552'></div><div class='a' style='left:699.7px;top:896.5px;width:1px;height:1px;background:#3d4552'></div><div class='a' style='left:711.6px;top:896.5px;width:1px;height:1px;background:#3d4552'></div><div class='a' style='left:723.4px;top:896.5px;width:1px;height:1px;background:#3d4552'></div><div class='a' style='left:735.3px;top:896.5px;width:1px;height:1px;background:#3d4552'></div><div class='a' style='left:747.1px;top:896.5px;width:1px;height:1px;background:#3d4552'></div><div class='a' style='left:758.9px;top:896.5px;width:1px;height:1px;background:#3d4552'></div><div class='a' style='left:770.8px;top:896.5px;width:1px;height:1px;background:#3d4552'></div><div class='a' style='left:782.6px;top:896.5px;width:1px;height:1px;background:#3d4552'></div><div class='a' style='left:794.5px;top:896.5px;width:1px;height:1px;background:#3d4552'></div><div class='a' style='left:806.3px;top:896.5px;width:1px;height:1px;background:#3d4552'></div><div class='a' style='left:818.1px;top:896.5px;width:1px;height:1px;background:#3d4552'></div><div class='a' style='left:830.0px;top:896.5px;width:1px;height:1px;background:#3d4552'></div><div class='a' style='left:841.8px;top:896.5px;width:1px;height:1px;background:#3d4552'></div><div class='a' style='left:853.7px;top:896.5px;width:1px;height:1px;background:#3d4552'></div><div class='a' style='left:865.5px;top:896.5px;width:1px;height:1px;background:#3d4552'></div><div class='yl' style='left:516.6px;top:744.6px'>500K</div><div class='yl' style='left:516.6px;top:773.7px'>400K</div><div class='yl' style='left:516.6px;top:802.8px'>300K</div><div class='yl' style='left:516.6px;top:832.0px'>200K</div><div class='yl' style='left:516.6px;top:861.1px'>100K</div><div class='yl' style='left:516.6px;top:890.2px'>0</div><div class='xl' style='left:588.6px;top:906.0px'>Dec 07</div><div class='xl' style='left:675.5px;top:906.0px'>Dec 09</div><div class='xl' style='left:762.4px;top:906.0px'>Dec <span style='letter-spacing:-1.3px'>11</span></div><div class='xl' style='left:849.3px;top:906.0px'>Dec <span style='letter-spacing:-1.3px'>1</span>3</div><div class='a' style='left:1000px;top:374.0px;width:303px;height:1px;background:#2b3340'></div><div class='a' style='left:1000px;top:397.5px;width:303px;height:1px;background:#2b3340'></div><div class='a' style='left:1000px;top:421.9px;width:303px;height:1px;background:#2b3340'></div><div class='a' style='left:1000px;top:446.2px;width:303px;height:1px;background:#2b3340'></div><div class='a' style='left:1000px;top:470.6px;width:303px;height:1px;background:#2b3340'></div><div class='a' style='left:1000px;top:494.1px;width:303px;height:1px;background:#2b3340'></div><div class='a' style='left:1000.5px;top:518.7px;width:1px;height:1px;background:#3d4552'></div><div class='a' style='left:1012.3px;top:518.7px;width:1px;height:1px;background:#3d4552'></div><div class='a' style='left:1024.2px;top:518.7px;width:1px;height:1px;background:#3d4552'></div><div class='a' style='left:1036.0px;top:518.7px;width:1px;height:1px;background:#3d4552'></div><div class='a' style='left:1047.9px;top:518.7px;width:1px;height:1px;background:#3d4552'></div><div class='a' style='left:1059.7px;top:518.7px;width:1px;height:1px;background:#3d4552'></div><div class='a' style='left:1071.5px;top:518.7px;width:1px;height:1px;background:#3d4552'></div><div class='a' style='left:1083.4px;top:518.7px;width:1px;height:1px;background:#3d4552'></div><div class='a' style='left:1095.2px;top:518.7px;width:1px;height:1px;background:#3d4552'></div><div class='a' style='left:1107.1px;top:518.7px;width:1px;height:1px;background:#3d4552'></div><div class='a' style='left:1118.9px;top:518.7px;width:1px;height:1px;background:#3d4552'></div><div class='a' style='left:1130.7px;top:518.7px;width:1px;height:1px;background:#3d4552'></div><div class='a' style='left:1142.6px;top:518.7px;width:1px;height:1px;background:#3d4552'></div><div class='a' style='left:1154.4px;top:518.7px;width:1px;height:1px;background:#3d4552'></div><div class='a' style='left:1166.3px;top:518.7px;width:1px;height:1px;background:#3d4552'></div><div class='a' style='left:1178.1px;top:518.7px;width:1px;height:1px;background:#3d4552'></div><div class='a' style='left:1189.9px;top:518.7px;width:1px;height:1px;background:#3d4552'></div><div class='a' style='left:1201.8px;top:518.7px;width:1px;height:1px;background:#3d4552'></div><div class='a' style='left:1213.6px;top:518.7px;width:1px;height:1px;background:#3d4552'></div><div class='a' style='left:1225.5px;top:518.7px;width:1px;height:1px;background:#3d4552'></div><div class='a' style='left:1237.3px;top:518.7px;width:1px;height:1px;background:#3d4552'></div><div class='a' style='left:1249.1px;top:518.7px;width:1px;height:1px;background:#3d4552'></div><div class='a' style='left:1261.0px;top:518.7px;width:1px;height:1px;background:#3d4552'></div><div class='a' style='left:1272.8px;top:518.7px;width:1px;height:1px;background:#3d4552'></div><div class='a' style='left:1284.7px;top:518.7px;width:1px;height:1px;background:#3d4552'></div><div class='a' style='left:1296.5px;top:518.7px;width:1px;height:1px;background:#3d4552'></div><div class='yl' style='left:948.3px;top:367.5px'>300M</div><div class='yl' style='left:948.3px;top:391.7px'>250M</div><div class='yl' style='left:948.3px;top:415.8px'>200M</div><div class='yl' style='left:948.3px;top:440.0px'>150M</div><div class='yl' style='left:948.3px;top:464.2px'>100M</div><div class='yl' style='left:948.3px;top:488.3px'>50M</div><div class='yl' style='left:948.3px;top:512.5px'>0</div><div class='xl' style='left:1019.5px;top:528.5px'>Dec 07</div><div class='xl' style='left:1106.4px;top:528.5px'>Dec 09</div><div class='xl' style='left:1193.3px;top:528.5px'>Dec <span style='letter-spacing:-1.3px'>11</span></div><div class='xl' style='left:1280.2px;top:528.5px'>Dec <span style='letter-spacing:-1.3px'>1</span>3</div><div class='a' style='left:999px;top:749.8px;width:304px;height:1px;background:#2b3340'></div><div class='a' style='left:999px;top:773.7px;width:304px;height:1px;background:#2b3340'></div><div class='a' style='left:999px;top:798.4px;width:304px;height:1px;background:#2b3340'></div><div class='a' style='left:999px;top:822.7px;width:304px;height:1px;background:#2b3340'></div><div class='a' style='left:999px;top:847.8px;width:304px;height:1px;background:#2b3340'></div><div class='a' style='left:999px;top:872.1px;width:304px;height:1px;background:#2b3340'></div><div class='a' style='left:999.5px;top:896.5px;width:1px;height:1px;background:#3d4552'></div><div class='a' style='left:1011.3px;top:896.5px;width:1px;height:1px;background:#3d4552'></div><div class='a' style='left:1023.2px;top:896.5px;width:1px;height:1px;background:#3d4552'></div><div class='a' style='left:1035.0px;top:896.5px;width:1px;height:1px;background:#3d4552'></div><div class='a' style='left:1046.9px;top:896.5px;width:1px;height:1px;background:#3d4552'></div><div class='a' style='left:1058.7px;top:896.5px;width:1px;height:1px;background:#3d4552'></div><div class='a' style='left:1070.5px;top:896.5px;width:1px;height:1px;background:#3d4552'></div><div class='a' style='left:1082.4px;top:896.5px;width:1px;height:1px;background:#3d4552'></div><div class='a' style='left:1094.2px;top:896.5px;width:1px;height:1px;background:#3d4552'></div><div class='a' style='left:1106.1px;top:896.5px;width:1px;height:1px;background:#3d4552'></div><div class='a' style='left:1117.9px;top:896.5px;width:1px;height:1px;background:#3d4552'></div><div class='a' style='left:1129.7px;top:896.5px;width:1px;height:1px;background:#3d4552'></div><div class='a' style='left:1141.6px;top:896.5px;width:1px;height:1px;background:#3d4552'></div><div class='a' style='left:1153.4px;top:896.5px;width:1px;height:1px;background:#3d4552'></div><div class='a' style='left:1165.3px;top:896.5px;width:1px;height:1px;background:#3d4552'></div><div class='a' style='left:1177.1px;top:896.5px;width:1px;height:1px;background:#3d4552'></div><div class='a' style='left:1188.9px;top:896.5px;width:1px;height:1px;background:#3d4552'></div><div class='a' style='left:1200.8px;top:896.5px;width:1px;height:1px;background:#3d4552'></div><div class='a' style='left:1212.6px;top:896.5px;width:1px;height:1px;background:#3d4552'></div><div class='a' style='left:1224.5px;top:896.5px;width:1px;height:1px;background:#3d4552'></div><div class='a' style='left:1236.3px;top:896.5px;width:1px;height:1px;background:#3d4552'></div><div class='a' style='left:1248.1px;top:896.5px;width:1px;height:1px;background:#3d4552'></div><div class='a' style='left:1260.0px;top:896.5px;width:1px;height:1px;background:#3d4552'></div><div class='a' style='left:1271.8px;top:896.5px;width:1px;height:1px;background:#3d4552'></div><div class='a' style='left:1283.7px;top:896.5px;width:1px;height:1px;background:#3d4552'></div><div class='a' style='left:1295.5px;top:896.5px;width:1px;height:1px;background:#3d4552'></div><div class='yl' style='left:946.7px;top:759.1px'>600K</div><div class='yl' style='left:946.7px;top:781.0px'>500K</div><div class='yl' style='left:946.7px;top:802.8px'>400K</div><div class='yl' style='left:946.7px;top:824.7px'>300K</div><div class='yl' style='left:946.7px;top:846.5px'>200K</div><div class='yl' style='left:946.7px;top:868.4px'>100K</div><div class='yl' style='left:946.7px;top:890.2px'>0</div><div class='xl' style='left:1018.5px;top:906.0px'>Dec 07</div><div class='xl' style='left:1105.4px;top:906.0px'>Dec 09</div><div class='xl' style='left:1192.3px;top:906.0px'>Dec <span style='letter-spacing:-1.3px'>11</span></div><div class='xl' style='left:1279.2px;top:906.0px'>Dec <span style='letter-spacing:-1.3px'>1</span>3</div><div class='a' style='left:1417px;top:374.0px;width:303px;height:1px;background:#2b3340'></div><div class='a' style='left:1417px;top:397.5px;width:303px;height:1px;background:#2b3340'></div><div class='a' style='left:1417px;top:421.9px;width:303px;height:1px;background:#2b3340'></div><div class='a' style='left:1417px;top:446.2px;width:303px;height:1px;background:#2b3340'></div><div class='a' style='left:1417px;top:470.6px;width:303px;height:1px;background:#2b3340'></div><div class='a' style='left:1417px;top:494.1px;width:303px;height:1px;background:#2b3340'></div><div class='a' style='left:1417.5px;top:518.7px;width:1px;height:1px;background:#3d4552'></div><div class='a' style='left:1429.3px;top:518.7px;width:1px;height:1px;background:#3d4552'></div><div class='a' style='left:1441.2px;top:518.7px;width:1px;height:1px;background:#3d4552'></div><div class='a' style='left:1453.0px;top:518.7px;width:1px;height:1px;background:#3d4552'></div><div class='a' style='left:1464.9px;top:518.7px;width:1px;height:1px;background:#3d4552'></div><div class='a' style='left:1476.7px;top:518.7px;width:1px;height:1px;background:#3d4552'></div><div class='a' style='left:1488.5px;top:518.7px;width:1px;height:1px;background:#3d4552'></div><div class='a' style='left:1500.4px;top:518.7px;width:1px;height:1px;background:#3d4552'></div><div class='a' style='left:1512.2px;top:518.7px;width:1px;height:1px;background:#3d4552'></div><div class='a' style='left:1524.1px;top:518.7px;width:1px;height:1px;background:#3d4552'></div><div class='a' style='left:1535.9px;top:518.7px;width:1px;height:1px;background:#3d4552'></div><div class='a' style='left:1547.7px;top:518.7px;width:1px;height:1px;background:#3d4552'></div><div class='a' style='left:1559.6px;top:518.7px;width:1px;height:1px;background:#3d4552'></div><div class='a' style='left:1571.4px;top:518.7px;width:1px;height:1px;background:#3d4552'></div><div class='a' style='left:1583.3px;top:518.7px;width:1px;height:1px;background:#3d4552'></div><div class='a' style='left:1595.1px;top:518.7px;width:1px;height:1px;background:#3d4552'></div><div class='a' style='left:1606.9px;top:518.7px;width:1px;height:1px;background:#3d4552'></div><div class='a' style='left:1618.8px;top:518.7px;width:1px;height:1px;background:#3d4552'></div><div class='a' style='left:1630.6px;top:518.7px;width:1px;height:1px;background:#3d4552'></div><div class='a' style='left:1642.5px;top:518.7px;width:1px;height:1px;background:#3d4552'></div><div class='a' style='left:1654.3px;top:518.7px;width:1px;height:1px;background:#3d4552'></div><div class='a' style='left:1666.1px;top:518.7px;width:1px;height:1px;background:#3d4552'></div><div class='a' style='left:1678.0px;top:518.7px;width:1px;height:1px;background:#3d4552'></div><div class='a' style='left:1689.8px;top:518.7px;width:1px;height:1px;background:#3d4552'></div><div class='a' style='left:1701.7px;top:518.7px;width:1px;height:1px;background:#3d4552'></div><div class='a' style='left:1713.5px;top:518.7px;width:1px;height:1px;background:#3d4552'></div><div class='yl' style='left:1365.3px;top:367.5px'>300M</div><div class='yl' style='left:1365.3px;top:391.7px'>250M</div><div class='yl' style='left:1365.3px;top:415.8px'>200M</div><div class='yl' style='left:1365.3px;top:440.0px'>150M</div><div class='yl' style='left:1365.3px;top:464.2px'>100M</div><div class='yl' style='left:1365.3px;top:488.3px'>50M</div><div class='yl' style='left:1365.3px;top:512.5px'>0</div><div class='xl' style='left:1436.5px;top:528.5px'>Dec 07</div><div class='xl' style='left:1523.4px;top:528.5px'>Dec 09</div><div class='xl' style='left:1610.3px;top:528.5px'>Dec <span style='letter-spacing:-1.3px'>11</span></div><div class='xl' style='left:1697.2px;top:528.5px'>Dec <span style='letter-spacing:-1.3px'>1</span>3</div><div class='a' style='left:1416px;top:749.8px;width:304px;height:1px;background:#2b3340'></div><div class='a' style='left:1416px;top:773.7px;width:304px;height:1px;background:#2b3340'></div><div class='a' style='left:1416px;top:798.4px;width:304px;height:1px;background:#2b3340'></div><div class='a' style='left:1416px;top:822.7px;width:304px;height:1px;background:#2b3340'></div><div class='a' style='left:1416px;top:847.8px;width:304px;height:1px;background:#2b3340'></div><div class='a' style='left:1416px;top:872.1px;width:304px;height:1px;background:#2b3340'></div><div class='a' style='left:1416.5px;top:896.5px;width:1px;height:1px;background:#3d4552'></div><div class='a' style='left:1428.3px;top:896.5px;width:1px;height:1px;background:#3d4552'></div><div class='a' style='left:1440.2px;top:896.5px;width:1px;height:1px;background:#3d4552'></div><div class='a' style='left:1452.0px;top:896.5px;width:1px;height:1px;background:#3d4552'></div><div class='a' style='left:1463.9px;top:896.5px;width:1px;height:1px;background:#3d4552'></div><div class='a' style='left:1475.7px;top:896.5px;width:1px;height:1px;background:#3d4552'></div><div class='a' style='left:1487.5px;top:896.5px;width:1px;height:1px;background:#3d4552'></div><div class='a' style='left:1499.4px;top:896.5px;width:1px;height:1px;background:#3d4552'></div><div class='a' style='left:1511.2px;top:896.5px;width:1px;height:1px;background:#3d4552'></div><div class='a' style='left:1523.1px;top:896.5px;width:1px;height:1px;background:#3d4552'></div><div class='a' style='left:1534.9px;top:896.5px;width:1px;height:1px;background:#3d4552'></div><div class='a' style='left:1546.7px;top:896.5px;width:1px;height:1px;background:#3d4552'></div><div class='a' style='left:1558.6px;top:896.5px;width:1px;height:1px;background:#3d4552'></div><div class='a' style='left:1570.4px;top:896.5px;width:1px;height:1px;background:#3d4552'></div><div class='a' style='left:1582.3px;top:896.5px;width:1px;height:1px;background:#3d4552'></div><div class='a' style='left:1594.1px;top:896.5px;width:1px;height:1px;background:#3d4552'></div><div class='a' style='left:1605.9px;top:896.5px;width:1px;height:1px;background:#3d4552'></div><div class='a' style='left:1617.8px;top:896.5px;width:1px;height:1px;background:#3d4552'></div><div class='a' style='left:1629.6px;top:896.5px;width:1px;height:1px;background:#3d4552'></div><div class='a' style='left:1641.5px;top:896.5px;width:1px;height:1px;background:#3d4552'></div><div class='a' style='left:1653.3px;top:896.5px;width:1px;height:1px;background:#3d4552'></div><div class='a' style='left:1665.1px;top:896.5px;width:1px;height:1px;background:#3d4552'></div><div class='a' style='left:1677.0px;top:896.5px;width:1px;height:1px;background:#3d4552'></div><div class='a' style='left:1688.8px;top:896.5px;width:1px;height:1px;background:#3d4552'></div><div class='a' style='left:1700.7px;top:896.5px;width:1px;height:1px;background:#3d4552'></div><div class='a' style='left:1712.5px;top:896.5px;width:1px;height:1px;background:#3d4552'></div><div class='yl' style='left:1363.7px;top:759.1px'>600K</div><div class='yl' style='left:1363.7px;top:781.0px'>500K</div><div class='yl' style='left:1363.7px;top:802.8px'>400K</div><div class='yl' style='left:1363.7px;top:824.7px'>300K</div><div class='yl' style='left:1363.7px;top:846.5px'>200K</div><div class='yl' style='left:1363.7px;top:868.4px'>100K</div><div class='yl' style='left:1363.7px;top:890.2px'>0</div><div class='xl' style='left:1435.5px;top:906.0px'>Dec 07</div><div class='xl' style='left:1522.4px;top:906.0px'>Dec 09</div><div class='xl' style='left:1609.3px;top:906.0px'>Dec <span style='letter-spacing:-1.3px'>11</span></div><div class='xl' style='left:1696.2px;top:906.0px'>Dec <span style='letter-spacing:-1.3px'>1</span>3</div><svg class='a' style='left:0;top:0' width='1800' height='1120' viewBox='0 0 1800 1120'><path d='M151.6,401.1 C152.6,393.9 155.8,357.8 157.7,357.8 C159.6,357.8 161.2,389.5 163.2,401.1 C165.2,412.7 167.5,414.4 169.8,427.5 C172.1,440.6 173.1,482.2 177.2,479.5 C181.3,476.8 190.2,427.4 194.5,411.0 C198.8,394.6 200.2,381.8 202.8,381.0 C205.4,380.2 208.3,399.6 210.2,406.0 C212.1,412.4 212.6,408.2 214.4,419.3 C216.2,430.4 219.1,466.0 221.3,472.9 C223.5,479.8 223.9,470.5 227.6,460.5 C231.3,450.5 239.6,416.8 243.7,412.7 C247.8,408.6 249.2,422.6 252.3,435.8 C255.5,449.0 259.4,498.8 262.6,491.9 C265.8,485.0 269.2,406.9 271.7,394.5 C274.2,382.1 275.1,421.2 277.6,417.6 C280.1,414.0 283.8,370.5 286.5,372.7 C289.2,374.9 291.5,418.4 293.6,430.8 C295.8,443.2 297.3,436.7 299.4,447.3 C301.5,457.9 303.4,500.5 306.1,494.4 C308.8,488.3 312.8,421.7 315.4,410.7 C318.0,399.7 319.8,427.1 321.5,428.3 C323.2,429.5 324.1,426.2 325.6,417.6 C327.1,409.0 328.6,374.5 330.5,376.7 C332.4,378.9 335.4,419.6 337.2,430.8 C339.0,442.0 339.2,432.9 341.3,444.0 C343.4,455.1 346.6,500.9 349.5,497.7 C352.4,494.5 356.1,434.1 358.6,425.0 C361.1,415.9 362.9,441.1 364.4,443.2 C365.9,445.3 366.0,444.4 367.7,437.4 C369.4,430.4 372.2,400.0 374.3,401.1 C376.4,402.2 378.5,434.9 380.1,444.0 C381.8,453.1 381.9,446.0 384.2,455.6 C386.4,465.2 390.6,500.7 393.6,501.5 C396.6,502.3 399.6,465.3 402.0,460.5 C404.4,455.7 405.6,475.6 408.2,472.9 C410.8,470.2 415.3,444.7 417.9,444.4 C420.5,444.1 422.0,465.3 423.8,471.3 C425.6,477.3 426.6,474.3 428.8,480.4 C431.0,486.5 434.4,507.2 437.1,508.1 C439.9,509.1 443.1,489.1 445.3,486.1 C447.5,483.1 448.5,490.7 450.3,490.3 C452.1,489.9 455.1,484.8 456.0,483.7' stroke='#22b9d5' stroke-width='2.0' fill='none' stroke-linecap='round' stroke-linejoin='round' /><path d='M697.8,518.4 C700.3,518.3 708.9,517.6 713.0,517.6 C717.1,517.6 719.6,519.6 722.7,518.3 C725.8,516.9 729.4,511.0 731.7,509.5 C734.0,508.0 734.7,509.9 736.3,509.5 C737.9,509.1 739.6,508.3 741.5,506.9 C743.4,505.5 745.8,501.2 747.9,501.1 C750.0,501.0 752.7,505.1 754.4,506.3 C756.1,507.5 756.3,506.8 758.3,508.2 C760.2,509.6 764.0,515.1 766.1,514.7 C768.2,514.3 769.1,510.8 770.6,505.6 C772.1,500.4 773.8,486.5 775.4,483.6 C777.0,480.7 778.7,488.4 780.3,488.2 C781.9,488.0 782.9,486.7 784.8,482.3 C786.7,477.9 789.6,461.9 791.7,461.6 C793.8,461.3 795.7,476.6 797.2,480.4 C798.8,484.2 798.9,480.0 801.0,484.3 C803.1,488.6 807.6,505.1 809.8,506.3 C812.0,507.5 812.4,502.4 814.0,491.4 C815.6,480.4 817.4,446.9 819.2,440.2 C821.0,433.5 823.1,450.2 824.6,451.0 C826.1,451.8 826.4,453.6 828.2,444.8 C830.0,436.0 833.2,398.8 835.4,398.1 C837.6,397.5 839.5,431.6 841.2,440.9 C842.9,450.2 843.6,444.6 845.7,453.8 C847.8,463.0 851.7,494.8 853.9,495.9 C856.1,497.0 857.2,472.2 858.7,460.3 C860.2,448.4 861.2,429.4 862.6,424.7 C864.0,419.9 865.6,431.7 866.8,431.8 C868.0,431.9 868.7,429.2 869.7,425.3 C870.7,421.4 872.2,411.3 872.7,408.5' stroke='#23b07f' stroke-width='2.0' fill='none' stroke-linecap='round' stroke-linejoin='round' /><path d='M151.6,791.0 C152.2,789.8 153.5,789.3 154.9,783.6 C156.3,777.9 158.5,760.4 160.2,756.7 C161.8,753.0 163.1,764.4 164.8,761.3 C166.5,758.1 168.7,735.9 170.6,737.8 C172.5,739.7 174.6,761.2 176.4,772.8 C178.2,784.4 179.2,808.9 181.3,807.5 C183.4,806.1 186.3,767.5 188.8,764.6 C191.3,761.7 194.3,786.8 196.5,790.2 C198.7,793.6 200.3,786.5 202.0,785.2 C203.7,784.0 204.3,789.3 206.4,782.7 C208.5,776.1 212.1,745.6 214.4,745.6 C216.7,745.6 218.3,771.7 220.1,782.7 C221.9,793.7 223.4,811.7 225.4,811.6 C227.4,811.5 230.4,786.7 232.0,781.9 C233.6,777.1 233.9,782.8 235.0,782.7 C236.1,782.6 237.1,780.0 238.6,781.1 C240.1,782.2 242.7,787.8 244.1,789.4 C245.5,791.0 244.9,800.1 247.0,791.0 C249.1,781.9 254.3,737.1 256.8,734.9 C259.3,732.7 260.5,766.4 262.2,777.8 C263.9,789.2 264.8,804.4 266.9,803.4 C269.0,802.4 272.4,774.3 275.0,772.0 C277.6,769.7 280.2,787.2 282.5,789.4 C284.8,791.6 287.0,786.0 288.7,785.2 C290.4,784.4 290.6,792.9 292.5,784.4 C294.4,775.9 297.8,733.2 300.2,734.0 C302.6,734.8 304.9,776.6 306.6,789.4 C308.3,802.2 308.3,810.4 310.2,810.8 C312.1,811.2 315.4,793.0 317.8,791.8 C320.2,790.6 322.7,802.6 324.8,803.4 C326.9,804.2 328.7,797.2 330.5,796.8 C332.3,796.4 333.4,806.6 335.5,801.2 C337.6,795.8 341.2,765.8 343.3,764.6 C345.4,763.5 346.2,782.8 347.9,794.3 C349.6,805.8 351.5,829.5 353.7,833.6 C355.9,837.7 359.1,820.7 361.1,819.1 C363.2,817.5 364.5,823.4 366.0,824.0 C367.5,824.6 368.3,822.6 370.2,822.7 C372.1,822.9 375.0,826.5 377.6,824.9 C380.2,823.3 383.6,810.7 385.9,813.3 C388.2,815.9 389.7,832.5 391.6,840.5 C393.5,848.5 395.4,858.9 397.4,861.2 C399.4,863.6 401.4,855.2 403.5,854.6 C405.6,854.0 407.7,857.7 409.8,857.9 C411.9,858.1 414.2,855.3 416.4,855.7 C418.6,856.1 420.9,859.4 423.0,860.4 C425.1,861.4 426.0,858.1 428.8,861.7 C431.6,865.3 437.0,879.1 440.0,881.8 C443.0,884.5 444.5,878.2 447.0,877.7 C449.5,877.2 453.8,878.7 455.2,878.9' stroke='#22b9d5' stroke-width='2.0' fill='none' stroke-linecap='round' stroke-linejoin='round' /><path d='M698.4,896.6 C700.2,896.4 705.7,896.6 709.5,895.5 C713.3,894.4 717.3,891.8 721.3,890.0 C725.3,888.2 730.1,885.8 733.5,884.9 C736.9,884.0 738.2,885.0 741.4,884.4 C744.6,883.8 749.9,883.0 752.5,881.0 C755.1,879.0 755.3,875.8 757.0,872.7 C758.7,869.6 760.5,863.4 762.6,862.4 C764.7,861.4 767.3,866.9 769.8,866.5 C772.3,866.1 775.5,861.0 777.6,860.2 C779.7,859.5 780.5,862.2 782.1,862.0 C783.7,861.8 784.8,860.1 787.1,858.7 C789.4,857.4 793.8,857.4 796.0,853.9 C798.2,850.4 798.9,842.8 800.5,838.0 C802.1,833.2 803.5,824.7 805.5,825.2 C807.5,825.7 810.3,840.2 812.8,840.8 C815.3,841.4 818.3,830.0 820.6,828.6 C822.9,827.2 824.6,833.2 826.7,832.2 C828.8,831.2 831.4,823.3 833.4,822.4 C835.4,821.5 837.5,827.4 839.0,826.9 C840.5,826.4 841.0,823.0 842.4,819.1 C843.8,815.2 845.7,802.3 847.4,803.2 C849.1,804.1 850.7,818.2 852.4,824.7 C854.1,831.2 855.4,840.8 857.4,842.0 C859.4,843.2 861.6,833.3 864.1,832.2 C866.6,831.1 870.9,834.8 872.2,835.3' stroke='#23b07f' stroke-width='2.0' fill='none' stroke-linecap='round' stroke-linejoin='round' /><path d='M998.8,817.3 C999.3,816.8 1000.6,817.5 1001.8,814.4 C1003.0,811.3 1005.1,801.9 1006.2,798.9 C1007.3,795.9 1007.4,796.7 1008.4,796.3 C1009.4,795.9 1011.1,797.7 1012.1,796.7 C1013.1,795.7 1013.1,796.0 1014.3,790.1 C1015.5,784.2 1017.6,759.9 1019.5,761.4 C1021.4,762.9 1023.9,790.4 1025.4,798.9 C1026.9,807.4 1026.8,813.3 1028.6,812.2 C1030.4,811.1 1034.0,793.3 1036.0,792.3 C1038.0,791.3 1039.3,802.7 1040.8,806.3 C1042.3,809.9 1043.2,813.0 1044.8,813.7 C1046.4,814.4 1048.9,811.4 1050.4,810.4 C1052.0,809.4 1052.0,815.4 1054.1,807.8 C1056.2,800.2 1060.5,766.5 1062.9,765.0 C1065.4,763.5 1067.3,791.0 1068.8,798.9 C1070.3,806.8 1070.2,812.1 1071.8,812.2 C1073.4,812.3 1076.3,801.0 1078.4,799.7 C1080.5,798.4 1081.7,802.4 1084.3,804.5 C1086.9,806.6 1091.5,813.4 1093.9,812.5 C1096.4,811.6 1097.2,809.0 1099.0,798.9 C1100.8,788.8 1102.7,752.2 1104.9,751.8 C1107.1,751.4 1110.6,788.5 1112.3,796.7 C1114.0,804.9 1113.6,801.6 1114.9,801.1 C1116.2,800.6 1118.6,793.2 1120.4,793.8 C1122.2,794.4 1123.7,801.6 1125.5,804.8 C1127.3,808.0 1129.1,812.3 1131.1,812.9 C1133.1,813.5 1135.8,809.9 1137.3,808.5 C1138.8,807.1 1138.6,813.8 1140.3,804.8 C1142.0,795.8 1145.3,755.4 1147.6,754.4 C1149.8,753.4 1152.1,789.4 1153.8,798.9 C1155.5,808.4 1156.5,810.0 1158.0,811.5 C1159.5,813.0 1161.2,807.7 1162.7,808.1 C1164.2,808.5 1165.4,811.2 1167.1,813.7 C1168.8,816.2 1170.9,821.9 1172.7,822.8 C1174.5,823.7 1176.4,820.0 1178.1,819.3 C1179.8,818.6 1180.8,825.5 1183.0,818.4 C1185.2,811.3 1188.8,778.8 1191.1,776.8 C1193.4,774.8 1194.8,797.3 1196.6,806.3 C1198.4,815.3 1199.9,827.2 1201.7,830.6 C1203.5,834.0 1205.4,826.5 1207.2,826.9 C1209.0,827.3 1210.8,831.1 1212.8,832.8 C1214.8,834.5 1217.2,836.4 1219.4,836.9 C1221.6,837.4 1223.5,839.4 1226.0,835.8 C1228.5,832.2 1231.9,815.4 1234.1,815.4 C1236.3,815.4 1237.4,828.2 1239.3,835.8 C1241.2,843.4 1243.4,857.1 1245.2,860.8 C1247.0,864.5 1248.0,857.7 1250.3,857.9 C1252.6,858.1 1257.1,861.5 1259.2,862.0 C1261.3,862.5 1261.6,860.4 1262.9,860.8 C1264.2,861.2 1265.0,864.4 1267.3,864.2 C1269.6,864.0 1273.6,857.0 1276.9,859.6 C1280.2,862.2 1284.1,877.2 1287.2,879.7 C1290.3,882.2 1292.7,875.3 1295.3,874.8 C1297.9,874.3 1301.4,876.4 1302.6,876.7' stroke='#22b9d5' stroke-width='2.0' fill='none' stroke-linecap='round' stroke-linejoin='round' /><path d='M1545.3,896.6 C1547.3,896.5 1554.5,896.0 1557.2,895.7 C1559.9,895.4 1559.8,895.5 1561.7,894.6 C1563.6,893.7 1566.3,891.6 1568.8,890.1 C1571.3,888.6 1573.3,886.2 1576.6,885.6 C1579.8,885.0 1585.5,886.3 1588.3,886.2 C1591.1,886.1 1591.4,885.5 1593.4,884.9 C1595.5,884.2 1598.4,885.0 1600.6,882.3 C1602.8,879.6 1604.7,872.2 1606.4,868.7 C1608.1,865.2 1609.2,862.0 1610.9,861.0 C1612.6,860.0 1614.8,862.9 1616.7,862.9 C1618.7,862.9 1620.3,860.4 1622.6,860.7 C1624.9,861.0 1628.1,864.0 1630.3,864.6 C1632.5,865.2 1633.5,865.0 1635.5,864.2 C1637.5,863.4 1640.6,862.0 1642.6,859.7 C1644.5,857.4 1645.3,857.1 1647.2,850.6 C1649.1,844.1 1652.0,823.9 1654.0,820.6 C1656.0,817.3 1657.5,829.8 1659.5,830.6 C1661.5,831.4 1663.1,824.6 1665.7,825.4 C1668.3,826.1 1672.6,834.8 1675.0,835.1 C1677.4,835.4 1678.4,827.8 1679.9,827.3 C1681.4,826.8 1682.3,832.7 1683.8,831.8 C1685.2,830.9 1687.3,826.5 1688.6,822.1 C1689.9,817.7 1690.7,812.0 1691.8,805.3 C1692.9,798.6 1693.8,781.3 1695.4,781.7 C1697.0,782.1 1699.8,802.2 1701.5,807.9 C1703.2,813.6 1703.8,815.2 1705.4,815.7 C1707.0,816.2 1709.4,810.8 1711.2,811.1 C1713.0,811.4 1715.0,816.1 1716.4,817.6 C1717.8,819.1 1719.1,819.8 1719.6,820.2' stroke='#23b07f' stroke-width='2.0' fill='none' stroke-linecap='round' stroke-linejoin='round' /><line x1='595' y1='519.3' x2='599' y2='519.3' stroke='#23b07f' stroke-width='2.2' stroke-linecap='round'/><line x1='667.8' y1='519.3' x2='671.8' y2='519.3' stroke='#23b07f' stroke-width='2.2' stroke-linecap='round'/><line x1='682.4' y1='519.3' x2='686.4' y2='519.3' stroke='#23b07f' stroke-width='2.2' stroke-linecap='round'/><line x1='595' y1='896.8' x2='599' y2='896.8' stroke='#23b07f' stroke-width='2.2' stroke-linecap='round'/><line x1='667.8' y1='896.8' x2='671.8' y2='896.8' stroke='#23b07f' stroke-width='2.2' stroke-linecap='round'/><line x1='682.4' y1='896.8' x2='686.4' y2='896.8' stroke='#23b07f' stroke-width='2.2' stroke-linecap='round'/><line x1='1442' y1='896.8' x2='1446' y2='896.8' stroke='#23b07f' stroke-width='2.2' stroke-linecap='round'/><path d='M1000.0,515.8 C1001.0,515.5 1004.0,514.2 1006.0,514.2 C1008.0,514.2 1009.7,515.0 1012.0,515.5 C1014.3,516.0 1014.5,516.8 1020.0,517.0 C1025.5,517.2 1039.7,516.9 1045.0,516.6 C1050.3,516.3 1049.5,515.0 1052.0,515.0 C1054.5,515.0 1053.7,516.3 1060.0,516.6 C1066.3,516.9 1080.0,517.0 1090.0,517.0 C1100.0,517.0 1110.0,516.9 1120.0,516.8 C1130.0,516.7 1140.0,516.7 1150.0,516.6 C1160.0,516.5 1167.3,516.4 1180.0,516.4 C1192.7,516.4 1218.3,516.6 1226.0,516.6' stroke='#7b4fd6' stroke-width='1.6' fill='none' stroke-linecap='round' stroke-linejoin='round' /><path d='M1000.0,519.3 C1037.7,519.3 1188.3,519.3 1226.0,519.3' stroke='#f0a238' stroke-width='3.4' fill='none' stroke-linecap='round' stroke-linejoin='round' /><path d='M1000.0,517.6 C1003.3,517.6 1011.7,517.9 1020.0,517.9 C1028.3,517.9 1040.0,517.4 1050.0,517.4 C1060.0,517.4 1070.0,517.8 1080.0,517.8 C1090.0,517.8 1098.3,517.5 1110.0,517.5 C1121.7,517.5 1130.7,517.7 1150.0,517.7 C1169.3,517.7 1213.3,517.5 1226.0,517.5' stroke='#efe8b0' stroke-width='1.3' fill='none' stroke-linecap='round' stroke-linejoin='round' /><path d='M1000.0,505.3 C1001.1,504.5 1003.9,500.3 1006.6,500.4 C1009.3,500.5 1012.6,504.2 1016.0,506.1 C1019.4,508.0 1022.9,511.9 1026.8,511.9 C1030.7,511.9 1035.2,507.6 1039.2,506.1 C1043.2,504.6 1047.2,502.8 1051.0,502.8 C1054.8,502.8 1059.0,504.6 1062.3,506.1 C1065.5,507.6 1067.5,511.3 1070.5,511.6 C1073.5,511.9 1077.0,508.9 1080.4,507.8 C1083.9,506.8 1087.6,505.2 1091.2,505.3 C1094.8,505.4 1098.5,507.1 1101.9,508.6 C1105.3,510.1 1108.6,515.1 1111.6,514.4 C1114.6,513.7 1117.3,506.0 1119.8,504.5 C1122.3,503.0 1123.9,505.9 1126.4,505.3 C1128.9,504.8 1132.0,500.9 1134.7,501.2 C1137.5,501.5 1140.7,505.6 1142.9,507.0 C1145.1,508.4 1145.8,508.0 1147.9,509.4 C1150.0,510.8 1152.7,515.8 1155.3,515.2 C1157.9,514.7 1161.0,507.6 1163.6,506.1 C1166.2,504.6 1168.5,506.8 1171.0,506.1 C1173.5,505.4 1175.9,501.9 1178.4,502.0 C1180.9,502.1 1183.8,505.7 1185.9,507.0 C1188.0,508.3 1188.8,508.6 1190.8,510.0 C1192.8,511.4 1195.7,515.4 1198.2,515.2 C1200.7,515.0 1202.8,509.8 1205.7,508.6 C1208.6,507.4 1212.8,508.4 1215.6,507.8 C1218.3,507.2 1220.5,505.5 1222.2,505.3 C1223.9,505.1 1225.4,506.4 1226.0,506.6' stroke='#e5534b' stroke-width='2.0' fill='none' stroke-linecap='round' stroke-linejoin='round' /><path d='M1000.0,411.2 C1001.1,406.2 1004.3,381.8 1006.6,381.5 C1008.9,381.2 1011.5,404.0 1013.6,409.5 C1015.7,415.0 1017.3,411.2 1019.4,414.5 C1021.5,417.8 1024.1,427.9 1026.0,429.4 C1027.9,430.9 1028.3,425.8 1030.9,423.6 C1033.5,421.4 1038.2,420.4 1041.6,416.1 C1045.0,411.8 1048.4,399.5 1051.1,398.0 C1053.8,396.5 1055.9,405.9 1057.7,407.1 C1059.5,408.3 1060.1,402.6 1062.0,405.4 C1063.9,408.1 1067.2,420.7 1068.9,423.6 C1070.6,426.5 1070.3,422.3 1072.2,422.7 C1074.1,423.1 1078.5,425.5 1080.4,426.0 C1082.3,426.5 1081.9,427.3 1083.8,425.7 C1085.7,424.1 1089.2,415.9 1091.7,416.1 C1094.2,416.3 1096.5,425.6 1098.6,426.9 C1100.7,428.1 1102.4,422.9 1104.4,423.6 C1106.4,424.3 1108.2,437.1 1110.7,431.0 C1113.2,424.9 1116.9,390.2 1119.5,387.2 C1122.1,384.2 1123.9,412.6 1126.4,412.8 C1128.9,413.0 1132.1,385.9 1134.7,388.1 C1137.3,390.3 1140.0,419.5 1142.1,426.0 C1144.2,432.5 1145.0,424.4 1147.1,426.9 C1149.2,429.4 1151.9,444.8 1154.5,440.9 C1157.1,437.0 1160.1,406.4 1162.7,403.8 C1165.3,401.2 1167.6,426.5 1170.2,425.2 C1172.8,423.9 1175.9,395.3 1178.4,396.0 C1180.9,396.7 1182.9,422.3 1185.0,429.4 C1187.1,436.5 1188.6,434.0 1190.8,438.4 C1193.0,442.8 1195.4,458.4 1197.9,455.8 C1200.4,453.2 1203.2,425.2 1205.7,422.7 C1208.2,420.2 1210.4,441.8 1213.1,440.9 C1215.8,439.9 1219.4,416.7 1221.7,417.0 C1224.0,417.3 1226.2,438.3 1227.1,442.6' stroke='#22b9d5' stroke-width='2.0' fill='none' stroke-linecap='round' stroke-linejoin='round' /><circle cx='1190.8' cy='438.4' r='3.6' fill='#22b9d5'/><circle cx='1190.8' cy='510' r='3.6' fill='#e5534b'/><circle cx='1190.8' cy='518.6' r='3.8' fill='#f29a33'/><path d='M1417.0,519.0 C1467.5,519.0 1669.5,519.0 1720.0,519.0' stroke='#e8457c' stroke-width='2.4' fill='none' stroke-linecap='round' stroke-linejoin='round' /><path d='M1417.0,518.5 C1455.8,518.4 1607.8,518.3 1650.0,518.0 C1670.0,517.7 1663.3,516.8 1670.0,516.5 C1676.7,516.2 1685.0,515.9 1690.0,516.0 C1695.0,516.1 1695.0,517.1 1700.0,517.0 C1705.0,516.9 1716.7,515.8 1720.0,515.5' stroke='#f5a623' stroke-width='1.5' fill='none' stroke-linecap='round' stroke-linejoin='round' /><path d='M1566.9,518.6 C1571.2,518.5 1584.0,517.9 1592.4,517.7 C1600.8,517.6 1612.2,518.2 1617.4,517.7 C1622.6,517.2 1620.8,515.4 1623.3,514.8 C1625.8,514.2 1629.5,514.7 1632.2,514.3 C1634.9,513.9 1636.8,512.5 1639.5,512.6 C1642.2,512.7 1645.2,513.9 1648.4,514.8 C1651.6,515.6 1655.8,518.4 1658.7,517.7 C1661.7,517.0 1663.5,511.8 1666.1,510.4 C1668.7,509.0 1671.5,510.3 1674.2,509.6 C1676.9,508.9 1679.7,506.4 1682.3,506.4 C1684.9,506.4 1687.6,508.8 1689.6,509.6 C1691.5,510.4 1692.2,510.2 1694.0,511.1 C1695.8,512.0 1698.2,515.2 1700.7,514.8 C1703.2,514.4 1706.5,510.0 1708.8,508.9 C1711.1,507.8 1712.9,508.8 1714.7,508.4 C1716.5,508.0 1719.0,506.7 1719.8,506.4' stroke='#8d4ef0' stroke-width='2.0' fill='none' stroke-linecap='round' stroke-linejoin='round' /><path d='M1417.0,518.0 C1427.5,517.7 1461.2,516.7 1480.0,516.0 C1498.8,515.3 1515.5,514.1 1530.0,514.0 C1544.5,513.9 1558.8,516.6 1566.9,515.5 C1575.0,514.4 1575.5,508.4 1578.4,507.4 C1581.3,506.4 1582.6,509.5 1584.3,509.6 C1586.0,509.7 1586.8,509.2 1588.7,508.2 C1590.6,507.2 1593.1,503.7 1595.4,503.4 C1597.7,503.1 1600.6,506.7 1602.7,506.4 C1604.8,506.1 1605.6,504.1 1607.9,501.5 C1610.2,498.9 1614.2,494.3 1616.7,490.5 C1619.2,486.7 1620.5,479.4 1622.6,478.7 C1624.7,478.0 1626.7,487.5 1629.5,486.3 C1632.3,485.1 1636.8,472.2 1639.5,471.3 C1642.2,470.4 1642.6,482.0 1645.7,480.9 C1648.8,479.8 1654.7,472.4 1658.0,464.7 C1661.3,457.0 1663.3,437.0 1665.8,434.5 C1668.3,432.0 1670.3,452.2 1673.1,449.5 C1675.8,446.8 1679.5,419.1 1682.3,418.3 C1685.0,417.5 1687.5,440.6 1689.6,444.8 C1691.7,449.0 1692.9,443.2 1694.8,443.6 C1696.7,444.0 1698.7,451.6 1701.1,447.0 C1703.5,442.4 1706.7,418.8 1709.1,416.1 C1711.5,413.4 1713.6,430.3 1715.4,430.8 C1717.2,431.3 1719.1,421.0 1719.8,419.0' stroke='#23b07f' stroke-width='2.0' fill='none' stroke-linecap='round' stroke-linejoin='round' /><circle cx='1607.9' cy='501.5' r='3.6' fill='#23b07f'/><circle cx='1607.9' cy='519' r='3.8' fill='#e8457c'/></svg><div class='a' style='left:1225px;top:439px;width:342px;height:213px;border-radius:9px;overflow:hidden;box-shadow:0 3px 8px rgba(5,8,12,0.3)'><div class='a' style='left:0;top:0;width:342px;height:41px;background:#222a35'></div><div class='a' style='left:0;top:41px;width:342px;height:172px;background:linear-gradient(100deg,#332d37 0%,#2d2e3a 45%,#293343 100%)'></div><div class='a' style='left:9px;top:179px;width:324px;height:1px;background:#3d424d'></div></div><div class='a' style='left:1274px;top:452px;font-size:11.4px;font-weight:700;color:#a4a9b1;line-height:14px'>10 DEC 2024 23:00:00 / 10 DEC 2024 23:00:00</div><svg class='a' style='left:1538px;top:451px' width='16' height='16' viewBox='0 0 16 16'><path d='M4.8 2.5H11.2L10.6 3.2L11.3 9.2L12.9 10.9H3.1L4.7 9.2L5.4 3.2Z' stroke='#a9aeb6' stroke-width='1.2' fill='none' stroke-linejoin='round'/><path d='M8 10.9V14.5' stroke='#a9aeb6' stroke-width='1.2'/></svg><div class='dot' style='left:1247.0px;top:501.1px;background:#22b9d5'></div><div class='a' style='left:1265.0px;top:496.6px;font-size:13.5px;font-weight:400;color:#f2f3f5;line-height:16px;-webkit-text-stroke:0.45px #f2f3f5'>debug<span style='margin-left:11.4px;font-size:13px'>167.7M</span></div><div class='dot' style='left:1247.0px;top:521.1px;background:#e5534b'></div><div class='a' style='left:1265.0px;top:516.6px;font-size:13.5px;font-weight:400;color:#f2f3f5;line-height:16px;-webkit-text-stroke:0.45px #f2f3f5'>info<span style='margin-left:11.4px;font-size:13px'>18.83M</span></div><div class='dot' style='left:1247.0px;top:541.1px;background:#7b4fd6'></div><div class='a' style='left:1265.0px;top:536.6px;font-size:13.5px;font-weight:400;color:#f2f3f5;line-height:16px;-webkit-text-stroke:0.45px #f2f3f5'>trace<span style='margin-left:11.4px;font-size:13px'>3.28M</span></div><div class='dot' style='left:1247.0px;top:561.1px;background:#e9e6a6'></div><div class='a' style='left:1265.0px;top:556.6px;font-size:13.5px;font-weight:400;color:#f2f3f5;line-height:16px;-webkit-text-stroke:0.45px #f2f3f5'>warn<span style='margin-left:11.4px;font-size:13px'>3.09M</span></div><div class='dot' style='left:1247.0px;top:581.1px;background:#f29a33'></div><div class='a' style='left:1265.0px;top:576.6px;font-size:13.5px;font-weight:400;color:#f2f3f5;line-height:16px;-webkit-text-stroke:0.45px #f2f3f5'>error<span style='margin-left:11.4px;font-size:13px'>157.38K</span></div><div class='dot' style='left:1399.7px;top:501.1px;background:#23b07f'></div><div class='a' style='left:1417.7px;top:496.6px;font-size:13.5px;font-weight:400;color:#f2f3f5;line-height:16px;-webkit-text-stroke:0.45px #f2f3f5'>debug<span style='margin-left:11.4px;font-size:13px'>36.5M</span></div><div class='dot' style='left:1399.7px;top:521.1px;background:#8d4ef0'></div><div class='a' style='left:1417.7px;top:516.6px;font-size:13.5px;font-weight:400;color:#f2f3f5;line-height:16px;-webkit-text-stroke:0.45px #f2f3f5'>info<span style='margin-left:11.4px;font-size:13px'>3.02M</span></div><div class='dot' style='left:1399.7px;top:541.1px;background:#f5a623'></div><div class='a' style='left:1417.7px;top:536.6px;font-size:13.5px;font-weight:400;color:#f2f3f5;line-height:16px;-webkit-text-stroke:0.45px #f2f3f5'>trace<span style='margin-left:11.4px;font-size:13px'>527.46K</span></div><div class='dot' style='left:1399.7px;top:561.1px;background:#22b9d5'></div><div class='a' style='left:1417.7px;top:556.6px;font-size:13.5px;font-weight:400;color:#f2f3f5;line-height:16px;-webkit-text-stroke:0.45px #f2f3f5'>warn<span style='margin-left:11.4px;font-size:13px'>631.32K</span></div><div class='dot' style='left:1399.7px;top:581.1px;background:#e8457c'></div><div class='a' style='left:1417.7px;top:576.6px;font-size:13.5px;font-weight:400;color:#f2f3f5;line-height:16px;-webkit-text-stroke:0.45px #f2f3f5'>error<span style='margin-left:11.4px;font-size:13px'>33.2K</span></div><div class='a' style='left:1446px;top:628px;font-size:11.4px;color:#9ba0a8;line-height:14px;-webkit-text-stroke:0.2px #9ba0a8'>&#8984; + click to pin tooltip</div></body></html>
